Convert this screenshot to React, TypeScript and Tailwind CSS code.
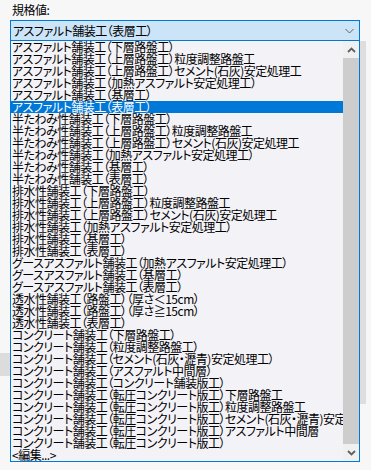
import React from "react";

const items: string[] = [
  "アスファルト舗装工（下層路盤工）",
  "アスファルト舗装工（上層路盤工）粒度調整路盤工",
  "アスファルト舗装工（上層路盤工）セメント(石灰)安定処理工",
  "アスファルト舗装工（加熱アスファルト安定処理工）",
  "アスファルト舗装工（基層工）",
  "アスファルト舗装工（表層工）",
  "半たわみ性舗装工（下層路盤工）",
  "半たわみ性舗装工（上層路盤工）粒度調整路盤工",
  "半たわみ性舗装工（上層路盤工）セメント(石灰)安定処理工",
  "半たわみ性舗装工（加熱アスファルト安定処理工）",
  "半たわみ性舗装工（基層工）",
  "半たわみ性舗装工（表層工）",
  "排水性舗装工（下層路盤工）",
  "排水性舗装工（上層路盤工）粒度調整路盤工",
  "排水性舗装工（上層路盤工）セメント(石灰)安定処理工",
  "排水性舗装工（加熱アスファルト安定処理工）",
  "排水性舗装工（基層工）",
  "排水性舗装工（表層工）",
  "グースアスファルト舗装工（加熱アスファルト安定処理工）",
  "グースアスファルト舗装工（基層工）",
  "グースアスファルト舗装工（表層工）",
  "透水性舗装工（路盤工）（厚さ＜15cm）",
  "透水性舗装工（路盤工）（厚さ≧15cm）",
  "透水性舗装工（表層工）",
  "コンクリート舗装工（下層路盤工）",
  "コンクリート舗装工（粒度調整路盤工）",
  "コンクリート舗装工（セメント(石灰・瀝青)安定処理工）",
  "コンクリート舗装工（アスファルト中間層）",
  "コンクリート舗装工（コンクリート舗装版工）",
  "コンクリート舗装工（転圧コンクリート版工）下層路盤工",
  "コンクリート舗装工（転圧コンクリート版工）粒度調整路盤工",
  "コンクリート舗装工（転圧コンクリート版工）セメント(石灰・瀝青)安定処理工",
  "コンクリート舗装工（転圧コンクリート版工）アスファルト中間層",
  "コンクリート舗装工（転圧コンクリート版工）",
  "<編集...>",
];

const SELECTED = 5;

export default function App() {
  return (
    <div className="relative w-[371px] h-[470px] overflow-hidden bg-[#f7f7f7] text-black font-['Noto_Sans_CJK_JP',sans-serif] [font-feature-settings:'palt'] text-[12px] tracking-[-0.5px]">
      {/* background artifacts */}
      <div className="absolute left-0 top-[353px] w-[10px] h-[23px] bg-[#dcdcdc]" />
      <div className="absolute left-[360px] top-[41px] w-[6px] h-[363px] bg-[#dedede]" />

      <div className="pl-[12px] pt-[3px] h-[20px] leading-[14px]">規格値:</div>

      <div className="ml-[10px] w-[350px] h-[21px] border border-[#0078d7] bg-[#cce4f7] flex items-center pl-[2px] pr-[4px]">
        <span className="flex-1 whitespace-nowrap leading-[14px]">アスファルト舗装工（表層工）</span>
        <svg width="9" height="6" viewBox="0 0 9 6" className="mr-[1px]">
          <polyline points="0.5,1 4.5,5 8.5,1" fill="none" stroke="#606060" strokeWidth="1" />
        </svg>
      </div>

      <div className="relative ml-[10px] w-[350px] h-[421px] border-x border-b border-[#0078d7] bg-[#f3f2f7] flex">
        <div className="w-[332px] overflow-hidden">
          {items.map((t, i) => (
            <div
              key={i}
              className={
                i === SELECTED
                  ? "h-[12px] leading-[12px] pl-[1px] whitespace-nowrap bg-[#0078d7] text-white"
                  : "h-[12px] leading-[12px] pl-[1px] whitespace-nowrap"
              }
            >
              {t}
            </div>
          ))}
        </div>
        <div className="w-[16px] flex flex-col bg-[#f0f0f0]">
          <div className="h-[17px] flex items-center justify-center">
            <svg width="9" height="6" viewBox="0 0 9 6">
              <polyline points="1,5 4.5,1.5 8,5" fill="none" stroke="#606060" strokeWidth="1.8" />
            </svg>
          </div>
          <div className="flex-1 bg-[#cdcdcd]" />
          <div className="h-[17px] flex items-center justify-center">
            <svg width="9" height="6" viewBox="0 0 9 6">
              <polyline points="1,1 4.5,4.5 8,1" fill="none" stroke="#606060" strokeWidth="1.8" />
            </svg>
          </div>
        </div>
      </div>
    </div>
  );
}
